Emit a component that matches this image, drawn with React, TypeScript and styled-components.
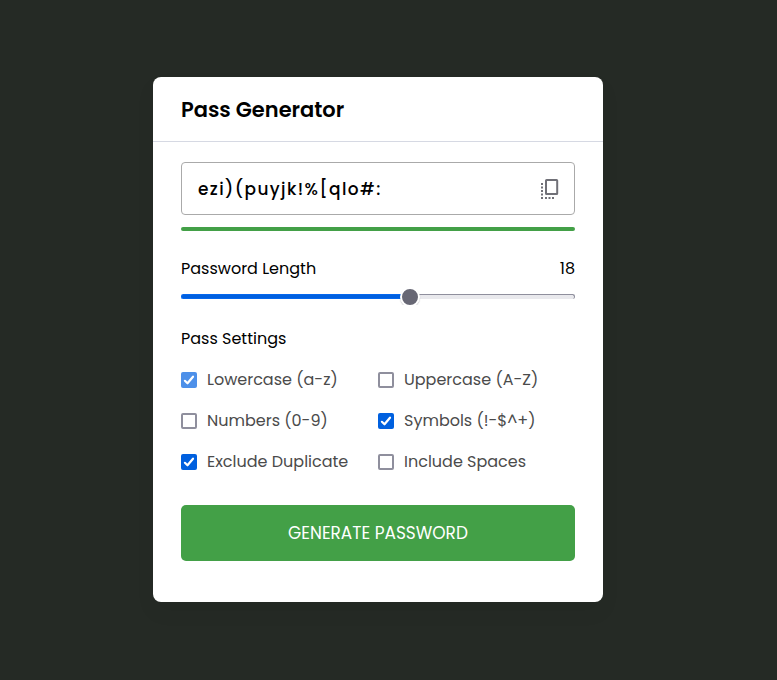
import React from "react";
import styled, { createGlobalStyle } from "styled-components";

const GlobalStyle = createGlobalStyle`
  * { box-sizing: border-box; margin: 0; padding: 0; }
  body {
    background: #252a25;
    color: #000;
    font-family: Poppins, Inter, "Open Sans", sans-serif;
    font-size: 16px;
  }
`;

const Page = styled.main`
  height: 680px;
  padding: 77px 0 0 153px;
`;

const Card = styled.section`
  width: 450px;
  height: 525px;
  background: #fff;
  border-radius: 8px;
  box-shadow: 0 10px 20px rgba(0, 0, 0, 0.05);
`;

const Title = styled.h1`
  height: 65px;
  padding-left: 28px;
  border-bottom: 1px solid #d6d9e3;
  font-size: 20.96px;
  font-weight: 600;
  line-height: 66px;
`;

const Body = styled.div`
  display: flex;
  flex-direction: column;
  padding: 20px 28px 0;
`;

const Field = styled.div`
  display: flex;
  align-items: center;
  justify-content: space-between;
  height: 53px;
  padding: 0 15px 0 16px;
  border: 1px solid #aaa;
  border-radius: 4px;
`;

const Label = styled.span`
  line-height: 24px;
  white-space: nowrap;
`;

const Password = styled(Label)`
  font-size: 16.96px;
  font-weight: 500;
  letter-spacing: 1.4px;
`;

const CopyIcon = styled.svg`
  display: block;
  width: 18px;
  height: 22px;
`;

const Strength = styled.div`
  height: 4px;
  margin-top: 12px;
  border-radius: 4px;
  background: #43a047;
`;

const LengthRow = styled.div`
  display: flex;
  justify-content: space-between;
  margin-top: 26px;
`;

const Slider = styled.div`
  display: flex;
  align-items: center;
  height: 16px;
  margin-top: 8px;
  overflow: hidden;
`;

const Filled = styled.div`
  width: 220px;
  height: 5px;
  margin-bottom: 1px;
  border-radius: 3px 0 0 3px;
  border: 1px solid #0668ee;
  border-right: 0;
  background: #0060df;
`;

const Thumb = styled.div`
  flex: none;
  width: 20px;
  height: 20px;
  margin: 0 -1px;
  border: 2px solid #fff;
  border-radius: 50%;
  background: #676774;
  box-shadow: 0 1px 1px rgba(58, 57, 68, 0.25);
  z-index: 1;
`;

const Rest = styled.div`
  flex: 1;
  height: 5px;
  margin-bottom: 1px;
  border-top: 1px solid #8f8f9d;
  border-right: 1px solid #8f8f9d;
  border-radius: 0 3px 3px 0;
  background: #e9e9ed;
`;

const SettingsTitle = styled(Label)`
  margin-top: 22px;
`;

const Options = styled.ul`
  display: grid;
  grid-template-columns: 197px 197px;
  grid-auto-rows: 41px;
  margin-top: 8px;
  list-style: none;
`;

const Option = styled.li`
  display: flex;
  align-items: center;
  gap: 10px;
  color: #4b4b4b;
`;

type BoxState = "on" | "locked" | "off";

const Box = styled.svg<{ $state: BoxState }>`
  flex: none;
  width: 16px;
  height: 16px;
  border-radius: 2px;
  border: ${(p) => (p.$state === "off" ? "2px solid #8f8f9d" : "0")};
  background: ${(p) =>
    p.$state === "off" ? "#fff" : p.$state === "on" ? "#0060df" : "#4d90e9"};
`;

const Generate = styled.button`
  height: 56px;
  margin-top: 23px;
  border: 0;
  border-radius: 5px;
  background: #43a047;
  color: #fff;
  font: inherit;
  font-size: 16.96px;
`;

const options: { text: string; state: BoxState }[] = [
  { text: "Lowercase (a-z)", state: "locked" },
  { text: "Uppercase (A-Z)", state: "off" },
  { text: "Numbers (0-9)", state: "off" },
  { text: "Symbols (!-$^+)", state: "on" },
  { text: "Exclude Duplicate", state: "on" },
  { text: "Include Spaces", state: "off" },
];

export default function App() {
  return (
    <>
      <GlobalStyle />
      <Page>
        <Card>
          <Title>Pass Generator</Title>
          <Body>
            <Field>
              <Password>ezi)(puyjk!%[qlo#:</Password>
              <CopyIcon viewBox="0 0 18 22" fill="none" stroke="#707077">
                <rect x="5" y="2" width="11.2" height="14" rx="0.6" strokeWidth="2" />
                <path d="M1 5V21" strokeWidth="2" strokeDasharray="2 1.5" />
                <path d="M4 20H13" strokeWidth="2" strokeDasharray="2 1.5" />
              </CopyIcon>
            </Field>
            <Strength />
            <LengthRow>
              <Label>Password Length</Label>
              <Label>18</Label>
            </LengthRow>
            <Slider>
              <Filled />
              <Thumb />
              <Rest />
            </Slider>
            <SettingsTitle>Pass Settings</SettingsTitle>
            <Options>
              {options.map((o) => (
                <Option key={o.text}>
                  <Box $state={o.state} viewBox="0 0 16 16" fill="none">
                    {o.state !== "off" && (
                      <path
                        d="M3.9 8.8L6.5 11.3L12 4.7"
                        stroke="#fff"
                        strokeWidth="2.2"
                        strokeLinecap="round"
                        strokeLinejoin="round"
                      />
                    )}
                  </Box>
                  <Label>{o.text}</Label>
                </Option>
              ))}
            </Options>
            <Generate>
              <Label>GENERATE PASSWORD</Label>
            </Generate>
          </Body>
        </Card>
      </Page>
    </>
  );
}
